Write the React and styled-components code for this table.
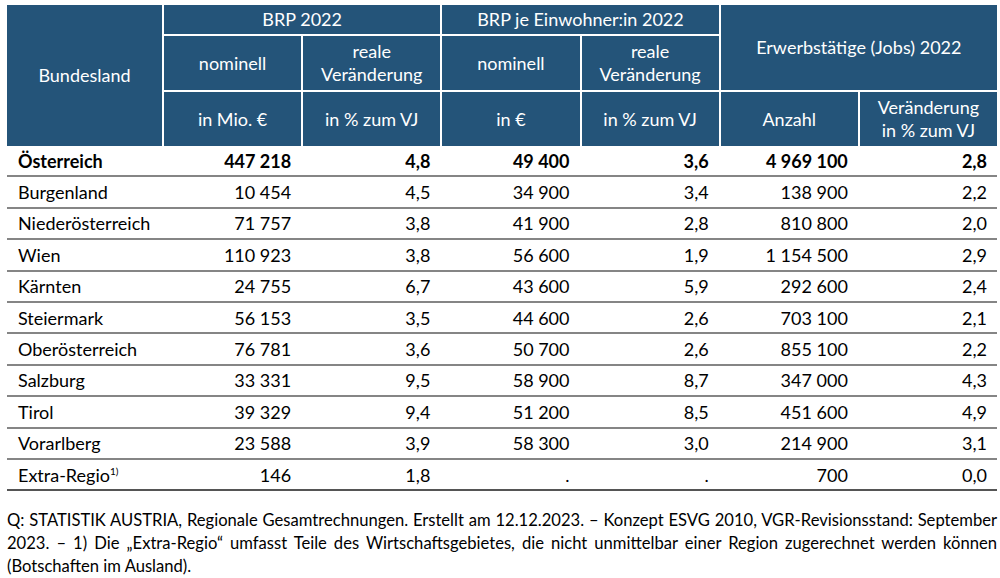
import styled, { createGlobalStyle } from "styled-components"

const GlobalStyle = createGlobalStyle`
body {
  margin: 0;
  background: #fff;
  font-family: Lato, "Liberation Sans", sans-serif;
  color: #000;
}
`

const Page = styled.div`
  width: 990px;
  padding: 5px 3px 0 7px;
`

const COLS = "155px repeat(6, 1fr)"

const Head = styled.div`
  display: grid;
  grid-template-columns: ${COLS};
  grid-template-rows: 29px 54px 54px;
  gap: 2px;
  background: #fff;
`

const HeadCell = styled.div`
  background: #245479;
  color: #fff;
  font-size: 18px;
  line-height: 23px;
  display: flex;
  align-items: center;
  justify-content: center;
  text-align: center;
  grid-column: ${p => p.$col || "auto"};
  grid-row: ${p => p.$row || "auto"};
`

const Row = styled.div`
  display: grid;
  grid-template-columns: ${COLS};
  column-gap: 2px;
  height: 31.4px;
  align-items: center;
  border-bottom: 2px solid ${p => (p.$last ? "#555" : "#858585")};
  box-sizing: border-box;
  font-size: 18px;
  font-weight: ${p => (p.$bold ? 700 : 400)};
`

const Name = styled.div`
  padding-left: 11px;
  white-space: nowrap;
`

const Num = styled.div`
  text-align: right;
  padding-right: 10px;
`

const Sup = styled.sup`
  font-size: 10px;
  vertical-align: 7px;
  line-height: 0;
`

const Note = styled.div`
  margin-top: 18px;
  font-size: 16.6px;
  line-height: 23px;
`

const NoteLine = styled.div`
  text-align: justify;
  text-align-last: ${p => (p.$last ? "left" : "justify")};
  white-space: nowrap;
`

const rows = [
  ["Österreich", "447 218", "4,8", "49 400", "3,6", "4 969 100", "2,8"],
  ["Burgenland", "10 454", "4,5", "34 900", "3,4", "138 900", "2,2"],
  ["Niederösterreich", "71 757", "3,8", "41 900", "2,8", "810 800", "2,0"],
  ["Wien", "110 923", "3,8", "56 600", "1,9", "1 154 500", "2,9"],
  ["Kärnten", "24 755", "6,7", "43 600", "5,9", "292 600", "2,4"],
  ["Steiermark", "56 153", "3,5", "44 600", "2,6", "703 100", "2,1"],
  ["Oberösterreich", "76 781", "3,6", "50 700", "2,6", "855 100", "2,2"],
  ["Salzburg", "33 331", "9,5", "58 900", "8,7", "347 000", "4,3"],
  ["Tirol", "39 329", "9,4", "51 200", "8,5", "451 600", "4,9"],
  ["Vorarlberg", "23 588", "3,9", "58 300", "3,0", "214 900", "3,1"],
  ["Extra-Regio", "146", "1,8", ".", ".", "700", "0,0"],
]

export default function App() {
  return (
    <Page>
      <GlobalStyle />
      <Head>
        <HeadCell $col="1" $row="1 / 4">Bundesland</HeadCell>
        <HeadCell $col="2 / 4" $row="1">BRP 2022</HeadCell>
        <HeadCell $col="4 / 6" $row="1">BRP je Einwohner:in 2022</HeadCell>
        <HeadCell $col="6 / 8" $row="1 / 3">Erwerbstätige (Jobs) 2022</HeadCell>
        <HeadCell $col="2" $row="2">nominell</HeadCell>
        <HeadCell $col="3" $row="2">reale<br />Veränderung</HeadCell>
        <HeadCell $col="4" $row="2">nominell</HeadCell>
        <HeadCell $col="5" $row="2">reale<br />Veränderung</HeadCell>
        <HeadCell $col="2" $row="3">in Mio. €</HeadCell>
        <HeadCell $col="3" $row="3">in % zum VJ</HeadCell>
        <HeadCell $col="4" $row="3">in €</HeadCell>
        <HeadCell $col="5" $row="3">in % zum VJ</HeadCell>
        <HeadCell $col="6" $row="3">Anzahl</HeadCell>
        <HeadCell $col="7" $row="3">Veränderung<br />in % zum VJ</HeadCell>
      </Head>
      {rows.map((r, i) => (
        <Row key={r[0]} $bold={i === 0} $last={i === rows.length - 1}>
          <Name>
            {r[0]}
            {r[0] === "Extra-Regio" && <Sup>1)</Sup>}
          </Name>
          {r.slice(1).map((v, j) => (
            <Num key={j}>{v}</Num>
          ))}
        </Row>
      ))}
      <Note>
        <NoteLine>
          Q: STATISTIK AUSTRIA, Regionale Gesamtrechnungen. Erstellt am 12.12.2023. – Konzept ESVG 2010, VGR-Revisionsstand: September
        </NoteLine>
        <NoteLine>
          2023. – 1) Die „Extra-Regio“ umfasst Teile des Wirtschaftsgebietes, die nicht unmittelbar einer Region zugerechnet werden können
        </NoteLine>
        <NoteLine $last>(Botschaften im Ausland).</NoteLine>
      </Note>
    </Page>
  )
}
